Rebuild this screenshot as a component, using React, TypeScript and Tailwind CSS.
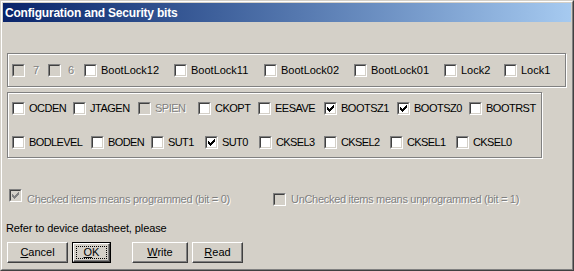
import React from "react";

const CHECK_RECTS: [number, number, number][] = [
  [6, 0, 1],
  [5, 1, 2],
  [0, 2, 1],
  [4, 2, 3],
  [0, 3, 2],
  [3, 3, 3],
  [0, 4, 5],
  [1, 5, 3],
  [2, 6, 1],
];

function Check({ checked = false, disabled = false, className = "" }: { checked?: boolean; disabled?: boolean; className?: string }) {
  return (
    <div className={`w-[13px] h-[13px] shrink-0 border border-t-[#808080] border-l-[#808080] border-r-white border-b-white ${className}`}>
      <div
        className={`w-full h-full border border-t-[#404040] border-l-[#404040] border-r-[#d4d0c8] border-b-[#d4d0c8] ${
          disabled ? "bg-[#d4d0c8]" : "bg-white"
        }`}
      >
        {checked && (
          <svg width="7" height="7" viewBox="0 0 7 7" shapeRendering="crispEdges" className="block ml-px mt-px">
            {CHECK_RECTS.map(([x, y, w], i) => (
              <rect key={i} x={x} y={y} width={w} height={1} fill={disabled ? "#808080" : "#000"} />
            ))}
          </svg>
        )}
      </div>
    </div>
  );
}

type ItemDef = { l: string; w?: string; c?: boolean; d?: boolean; x?: string };

function Item({ it, labelClass = "" }: { it: ItemDef; labelClass?: string }) {
  return (
    <div className={`flex items-center h-[13px] gap-[4px] shrink-0 ${it.w ?? ""}`}>
      <Check checked={it.c} disabled={it.d} />
      <span
        className={`leading-[13px] whitespace-nowrap ${labelClass} ${it.x ?? ""} ${
          it.d ? "text-[#808080] [text-shadow:1px_1px_0_#fff]" : "text-black"
        }`}
      >
        {it.l}
      </span>
    </div>
  );
}

const row1: ItemDef[] = [
  { l: "7", w: "w-[36px]", d: true, x: "ml-[4px]" },
  { l: "6", w: "w-[36px]", d: true, x: "ml-[3px]" },
  { l: "BootLock12", w: "w-[90px]" },
  { l: "BootLock11", w: "w-[90px]" },
  { l: "BootLock02", w: "w-[90px]" },
  { l: "BootLock01", w: "w-[90px]" },
  { l: "Lock2", w: "w-[60px]" },
  { l: "Lock1" },
];

const rowA: ItemDef[] = [
  { l: "OCDEN", w: "w-[61px]" },
  { l: "JTAGEN", w: "w-[65px]" },
  { l: "SPIEN", w: "w-[60px]", d: true },
  { l: "CKOPT", w: "w-[60px]" },
  { l: "EESAVE", w: "w-[66px]" },
  { l: "BOOTSZ1", w: "w-[73px]", c: true },
  { l: "BOOTSZ0", w: "w-[72px]", c: true },
  { l: "BOOTRST" },
];

const rowB: ItemDef[] = [
  { l: "BODLEVEL", w: "w-[79px]" },
  { l: "BODEN", w: "w-[60px]" },
  { l: "SUT1", w: "w-[54px]" },
  { l: "SUT0", w: "w-[54px]", c: true },
  { l: "CKSEL3", w: "w-[65px]" },
  { l: "CKSEL2", w: "w-[66px]" },
  { l: "CKSEL1", w: "w-[66px]" },
  { l: "CKSEL0" },
];

function Btn({ children, w }: { children: React.ReactNode; w: string }) {
  return (
    <div
      className={`h-[21px] ${w} border border-t-white border-l-white border-r-[#404040] border-b-[#404040] shadow-[inset_-1px_-1px_0_#808080] flex items-center justify-center leading-[13px] text-black`}
    >
      {children}
    </div>
  );
}

export default function App() {
  return (
    <div className="w-[574px] h-[271px] bg-[#d4d0c8] font-['Liberation_Sans',Arial,sans-serif] text-[11px] border border-t-[#d4d0c8] border-l-[#d4d0c8] border-r-[#404040] border-b-[#404040] overflow-hidden">
      <div className="w-full h-full border border-t-white border-l-white border-r-[#808080] border-b-[#808080] p-px flex flex-col">
        {/* Title bar */}
        <div className="h-[19px] shrink-0 bg-linear-to-r from-[#0a246a] to-[#a6caf0] pl-[2px] pt-px flex items-center">
          <span className="text-white font-bold text-[12px] tracking-[-0.2px] leading-[18px] whitespace-nowrap">
            Configuration and Security bits
          </span>
        </div>

        {/* Group box 1 */}
        <div className="mt-[31px] ml-[4px] w-[559px] h-[34px] shrink-0 border border-[#808080] shadow-[inset_1px_1px_0_#fff,1px_1px_0_#fff] pt-[10px] pl-[4px]">
          <div className="flex items-start">
            {row1.map((it) => (
              <Item key={it.l} it={it} />
            ))}
          </div>
        </div>

        {/* Group box 2 */}
        <div className="mt-[5px] ml-[4px] w-[535px] h-[66px] shrink-0 border border-[#808080] shadow-[inset_1px_1px_0_#fff,1px_1px_0_#fff] pt-[9px] pl-[4px] flex flex-col gap-[21px]">
          <div className="flex items-start">
            {rowA.map((it) => (
              <Item key={it.l} it={it} labelClass="tracking-[-0.5px]" />
            ))}
          </div>
          <div className="flex items-start">
            {rowB.map((it) => (
              <Item key={it.l} it={it} labelClass="tracking-[-0.6px]" />
            ))}
          </div>
        </div>

        {/* Legend */}
        <div className="mt-[35px] ml-[6px] flex items-start h-[13px] shrink-0">
          <div className="w-[264px] flex items-start gap-[5px] shrink-0">
            <Check checked disabled className="-mt-[4px]" />
            <span className="leading-[13px] whitespace-nowrap tracking-[-0.3px] text-[#808080] [text-shadow:1px_1px_0_#fff]">
              Checked items means programmed (bit = 0)
            </span>
          </div>
          <div className="flex items-start gap-[5px] shrink-0">
            <Check disabled />
            <span className="leading-[13px] whitespace-nowrap tracking-[-0.3px] text-[#808080] [text-shadow:1px_1px_0_#fff]">
              UnChecked items means unprogrammed (bit = 1)
            </span>
          </div>
        </div>

        <div className="mt-[16px] ml-[3px] leading-[13px] text-black whitespace-nowrap tracking-[-0.1px] shrink-0">
          Refer to device datasheet, please
        </div>

        {/* Buttons */}
        <div className="mt-[7px] ml-[4px] flex items-start shrink-0">
          <Btn w="w-[61px]">
            <span>
              <u>C</u>ancel
            </span>
          </Btn>
          <div className="ml-[4px] h-[21px] w-[39px] border border-black">
            <div className="w-full h-full border border-t-white border-l-white border-r-[#404040] border-b-[#404040] shadow-[inset_-1px_-1px_0_#808080] flex">
              <div className="m-[2px] flex-1 border border-dotted border-black flex items-center justify-center leading-[13px] text-black">
                <span>
                  <u>O</u>K
                </span>
              </div>
            </div>
          </div>
          <div className="ml-[21px]">
            <Btn w="w-[56px]">
              <span>
                <u>W</u>rite
              </span>
            </Btn>
          </div>
          <div className="ml-[4px]">
            <Btn w="w-[51px]">
              <span>
                <u>R</u>ead
              </span>
            </Btn>
          </div>
        </div>
      </div>
    </div>
  );
}
